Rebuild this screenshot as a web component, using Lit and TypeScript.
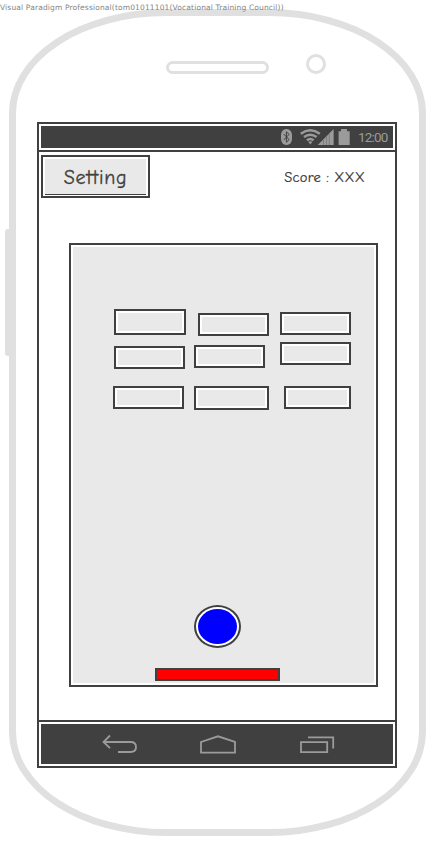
import { LitElement, html, css } from "lit";
import { customElement } from "lit/decorators.js";
import { styleMap } from "lit/directives/style-map.js";

interface Brick { x: number; y: number; w: number; h: number; }

// Brick positions, relative to the inside of the board's border.
const BRICKS: Brick[] = [
  { x: 43, y: 64, w: 72, h: 26 },
  { x: 127, y: 68, w: 71, h: 23 },
  { x: 209, y: 67, w: 71, h: 23 },
  { x: 43, y: 101, w: 71, h: 23 },
  { x: 123, y: 100, w: 71, h: 23 },
  { x: 209, y: 97, w: 71, h: 23 },
  { x: 42, y: 141, w: 71, h: 23 },
  { x: 123, y: 141, w: 75, h: 24 },
  { x: 213, y: 141, w: 67, h: 23 },
];

@customElement("status-bar")
export class StatusBar extends LitElement {
  static styles = css`
    :host { display: flex; box-sizing: border-box; height: 30px; border-bottom: 2px solid #404040; border-top: 2px solid #404040; padding: 2px; background: #fff; }
    .fill { flex: 1; display: flex; justify-content: flex-end; align-items: center; background: #404040; padding-right: 5px; }
    .icons { display: block; margin-right: 8px; }
    .clock { font: 13.5px/22px Roboto, sans-serif; color: #9b9b9b; width: 30px; letter-spacing: -0.8px; white-space: nowrap; }
  `;
  render() {
    return html`<div class="fill">
      <svg class="icons" width="70" height="22" viewBox="280 126 70 22">
        <rect x="281" y="129" width="11" height="16" rx="5.2" ry="6" fill="#9b9b9b" />
        <path d="M283.7 134l5.4 5.6-2.7 2.6v-10.4l2.7 2.6-5.4 5.6" fill="none" stroke="#404040" stroke-width="1" />
        <g fill="none" stroke="#9b9b9b" stroke-width="2.5">
          <path d="M300.8 133.7Q310.3 126.8 319.8 133.7" />
          <path d="M304 137.1Q310.3 132.4 316.6 137.1" />
          <path d="M307 140.3Q310.3 137.8 313.6 140.3" />
        </g>
        <path d="M308.2 141.8Q310.3 140.6 312.4 141.8L310.3 144.4z" fill="#9b9b9b" />
        <path d="M317.8 145L333.6 129V145z" fill="#9b9b9b" />
        <path d="M323.5 139.5V145M326.5 136.5V145M329.3 133.7V145" stroke="#707070" stroke-width=".7" />
        <path d="M338.6 131.2h2.4V129h6v2.2h2.7V145H338.6z" fill="#9b9b9b" />
      </svg>
      <span class="clock">12:00</span>
    </div>`;
  }
}

@customElement("game-board")
export class GameBoard extends LitElement {
  static styles = css`
    :host { display: block; position: relative; box-sizing: border-box; width: 309px; height: 444px; border: 2px solid #404040; padding: 2px; background: #e9e9e9 content-box; }
    .brick { position: absolute; box-sizing: border-box; border: 2px solid #404040; box-shadow: inset 0 0 0 2px #fff; background: #e9e9e9; }
    .ball { position: absolute; left: 123px; top: 360px; box-sizing: border-box; width: 47px; height: 43px; border: 2px solid #404040; border-radius: 50%; padding: 2px; background: #fff; }
    .core { width: 100%; height: 100%; border-radius: 50%; background: #00f; }
    .paddle { position: absolute; left: 84px; top: 423px; box-sizing: border-box; width: 125px; height: 13px; border: 2px solid #404040; background: #f00; }
  `;
  render() {
    return html`
      ${BRICKS.map((b) => html`<div class="brick" style=${styleMap({ left: `${b.x}px`, top: `${b.y}px`, width: `${b.w}px`, height: `${b.h}px` })}></div>`)}
      <div class="ball"><div class="core"></div></div>
      <div class="paddle"></div>`;
  }
}

@customElement("nav-bar")
export class NavBar extends LitElement {
  static styles = css`
    :host { display: flex; box-sizing: border-box; height: 48px; border-top: 2px solid #404040; border-bottom: 2px solid #404040; padding: 2px; background: #fff; }
    .fill { flex: 1; display: flex; align-items: center; justify-content: space-between; padding: 0 58px 0 60px; background: #404040; }
    .icon { display: block; fill: none; stroke: #9b9b9b; stroke-width: 1.8; }
  `;
  render() {
    return html`<div class="fill">
      <svg class="icon" width="37" height="22" viewBox="101 733 37 22"><path d="M110 735.5L103.5 742L110 748.2M103.5 742H130.5C134.5 742 136 744.2 136 747C136 749.8 134.5 752 130.5 752H118" /></svg>
      <svg class="icon" width="38" height="22" viewBox="200 733 38 22"><path d="M201 742L218 736.3L235 742V752.7H201z" /></svg>
      <svg class="icon" width="36" height="22" viewBox="299 733 36 22"><path d="M301 742.2H327.2V752.2H301zM308 737.4H333.2V748.5" /></svg>
    </div>`;
  }
}

@customElement("app-root")
export class AppRoot extends LitElement {
  static styles = css`
    :host { display: block; position: relative; width: 446px; height: 856px; overflow: hidden; background: #fff; }
    .watermark { position: absolute; left: 0; top: 3px; font: 7.5px/10px "DejaVu Sans", sans-serif; color: #858585; white-space: nowrap; letter-spacing: 0.15px; }
    .phone { display: flow-root; position: relative; box-sizing: border-box; width: 417px; height: 827px; margin: 9px 0 0 9px; border: 7px solid #e0e0e0; border-radius: 157px / 104px; }
    .volume { position: absolute; left: -11px; top: 213px; width: 5px; height: 127px; border-radius: 3px 0 0 3px; background: #e0e0e0; }
    .top { display: flex; align-items: flex-end; gap: 37px; height: 58px; padding: 0 0 48px 150px; }
    .speaker { box-sizing: border-box; width: 103px; height: 13px; border: 3px solid #e0e0e0; border-radius: 7px; }
    .camera { box-sizing: border-box; width: 20px; height: 20px; border: 3px solid #e0e0e0; border-radius: 50%; }
    .screen { display: flex; flex-direction: column; box-sizing: border-box; width: 360px; height: 646px; margin-left: 21px; border: solid #404040; border-width: 0 2px; }
    .head { display: flex; justify-content: space-between; padding: 3px 30px 0 2px; height: 88px; }
    .setting { display: block; box-sizing: border-box; width: 109px; height: 43px; margin: 0; border: 2px solid #404040; padding: 2px; background: #fff; }
    .label { display: block; box-sizing: border-box; height: 36px; margin-bottom: 3px; border-bottom: 1px solid #404040; background: #e9e9e9; text-align: center; font: 20px/38px "Comic Sans MS", "Comic Neue", "Open Sans", sans-serif; color: #404040; letter-spacing: .7px; font-variant-ligatures: none; -webkit-text-stroke: .3px #404040; }
    .score { font: 14.5px/20px "Comic Sans MS", "Comic Neue", "Open Sans", sans-serif; color: #333; letter-spacing: .3px; margin-top: 13px; white-space: nowrap; -webkit-text-stroke: .2px #333; }
    .play { flex: 1; padding: 0 0 0 30px; }
  `;
  render() {
    return html`
      <div class="phone">
        <div class="volume"></div>
        <div class="top"><div class="speaker"></div><div class="camera"></div></div>
        <div class="screen">
          <status-bar></status-bar>
          <div class="head">
            <button class="setting"><span class="label">Setting</span></button>
            <div class="score">Score : XXX</div>
          </div>
          <div class="play"><game-board></game-board></div>
          <nav-bar></nav-bar>
        </div>
      </div>
      <div class="watermark">Visual Paradigm Professional(tom01011101(Vocational Training Council))</div>`;
  }
}
